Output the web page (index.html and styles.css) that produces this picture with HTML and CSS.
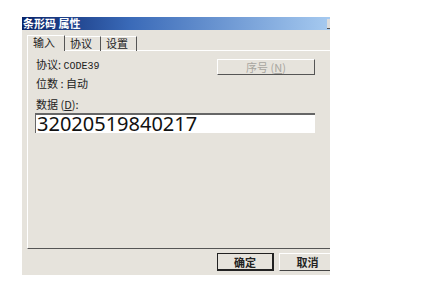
FILE: index.html
```html
<!DOCTYPE html>
<html>
<head>
    <title>条形码 属性</title>
    <link rel="stylesheet" href="styles.css">
</head>
<body>

    <div class="dialog">
        <div class="title-bar">
            <span class="title-text">条形码 属性</span>
            <span class="title-btn"></span>
        </div>
        <div class="tabs">
            <div class="tab active">输入</div>
            <div class="tab">协议</div>
            <div class="tab">设置</div>
        </div>
        <div class="panel">
            <div class="info-row">
                <div class="info-labels">
                    <div class="info-line">协议: <span class="mono">CODE39</span></div>
                    <div class="info-line">位数 : 自动</div>
                </div>
                <button class="serial-button" disabled>序号 (<u>N</u>)</button>
            </div>
            <div class="data-label">数据 (<u>D</u>):</div>
            <div class="data-input">32020519840217</div>
        </div>
        <div class="dialog-buttons">
            <button class="dlg-button default">确定</button>
            <button class="dlg-button">取消</button>
        </div>
    </div>

</body>
</html>
```

FILE: styles.css
```css
* {
    box-sizing: border-box;
}

body {
    margin: 0;
    background: #ffffff;
    font-family: "Noto Sans CJK SC", "DejaVu Sans", sans-serif;
    font-size: 11px;
    color: #222;
    overflow: hidden;
}

.dialog {
    margin-left: 22px;
    margin-top: 17px;
    width: 308px;
    height: 258px;
    background: #e6e3dc;
    overflow: hidden;
}

.title-bar {
    height: 13px;
    display: flex;
    align-items: center;
    justify-content: space-between;
    background: linear-gradient(to right, #0a246a 0%, #3a6ab8 35%, #a6caf0 100%);
}

.title-text {
    color: #fff;
    font-weight: bold;
    font-size: 11px;
    line-height: 13px;
    padding-left: 1px;
}

.title-btn {
    width: 3px;
    height: 10px;
    background: #dcdcdc;
    border-bottom: 1px solid #555;
}

.tabs {
    display: flex;
    margin-top: 5px;
    padding-left: 5px;
    height: 15px;
}

.tab {
    line-height: 13px;
    height: 15px;
    padding: 0 8px 0 5px;
    border-right: 1px solid #555;
    border-top: 1px solid #fff;
    margin-top: 1px;
}

.tab.active {
    margin-top: 0;
    padding: 0 9px 0 5px;
    border-left: 1px solid #fff;
    background: #e6e3dc;
    position: relative;
    z-index: 1;
    height: 16px;
}

.panel {
    margin-left: 5px;
    height: 199px;
    border-left: 1px solid #fff;
    border-top: 1px solid #fff;
    border-bottom: 1px solid #555;
    padding: 5px 15px 0 7px;
}

.info-row {
    display: flex;
    justify-content: space-between;
    align-items: flex-start;
}

.info-line {
    line-height: 17px;
    margin-left: 1px;
}

.mono {
    font-family: "Liberation Mono", monospace;
    font-size: 10px;
}

.serial-button {
    width: 98px;
    height: 16px;
    margin-top: 3px;
    font-family: inherit;
    font-size: 11px;
    color: #a8a6a0;
    background: #e6e3dc;
    border: 1px solid #fff;
    border-right-color: #555;
    border-bottom-color: #555;
    padding: 0;
    line-height: 13px;
}

.data-label {
    margin-top: 6px;
    margin-left: 1px;
    line-height: 13px;
    margin-bottom: 2px;
}

.data-input {
    height: 20px;
    background: #fff;
    border-top: 2px solid #666;
    border-left: 1px solid #666;
    font-family: "Noto Sans", sans-serif;
    font-size: 20px;
    line-height: 18px;
    color: #111;
    padding-left: 1px;
}

.dialog-buttons {
    display: flex;
    justify-content: flex-end;
    gap: 5px;
    margin-top: 4px;
    margin-right: -6px;
}

.dlg-button {
    width: 57px;
    height: 18px;
    padding: 0;
    font-family: inherit;
    font-size: 11px;
    font-weight: bold;
    color: #222;
    background: #e6e3dc;
    border: 1px solid #fff;
    border-right-color: #444;
    border-bottom-color: #444;
    line-height: 14px;
}

.dlg-button.default {
    border: 1px solid #222;
    border-right-width: 2px;
    border-bottom-width: 2px;
}
```
